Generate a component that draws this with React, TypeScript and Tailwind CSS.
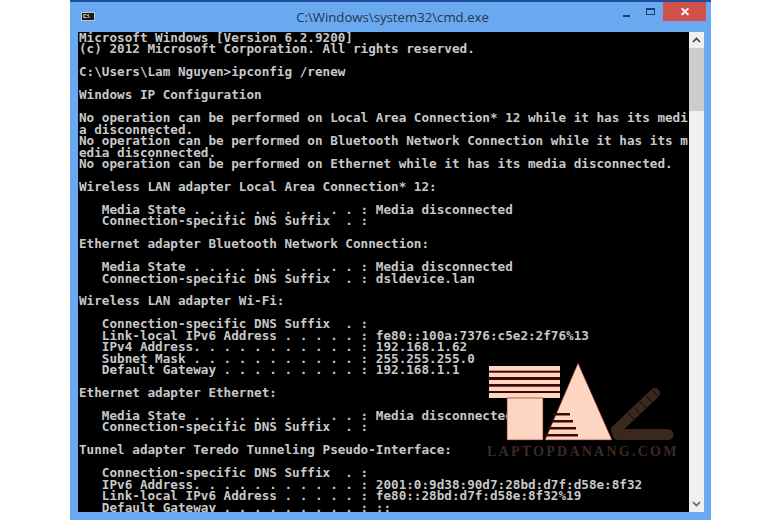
const lines = [
  'Microsoft Windows [Version 6.2.9200]',
  '(c) 2012 Microsoft Corporation. All rights reserved.',
  '',
  'C:\\Users\\Lam Nguyen>ipconfig /renew',
  '',
  'Windows IP Configuration',
  '',
  'No operation can be performed on Local Area Connection* 12 while it has its medi',
  'a disconnected.',
  'No operation can be performed on Bluetooth Network Connection while it has its m',
  'edia disconnected.',
  'No operation can be performed on Ethernet while it has its media disconnected.',
  '',
  'Wireless LAN adapter Local Area Connection* 12:',
  '',
  '   Media State . . . . . . . . . . . : Media disconnected',
  '   Connection-specific DNS Suffix  . :',
  '',
  'Ethernet adapter Bluetooth Network Connection:',
  '',
  '   Media State . . . . . . . . . . . : Media disconnected',
  '   Connection-specific DNS Suffix  . : dsldevice.lan',
  '',
  'Wireless LAN adapter Wi-Fi:',
  '',
  '   Connection-specific DNS Suffix  . :',
  '   Link-local IPv6 Address . . . . . : fe80::100a:7376:c5e2:2f76%13',
  '   IPv4 Address. . . . . . . . . . . : 192.168.1.62',
  '   Subnet Mask . . . . . . . . . . . : 255.255.255.0',
  '   Default Gateway . . . . . . . . . : 192.168.1.1',
  '',
  'Ethernet adapter Ethernet:',
  '',
  '   Media State . . . . . . . . . . . : Media disconnected',
  '   Connection-specific DNS Suffix  . :',
  '',
  'Tunnel adapter Teredo Tunneling Pseudo-Interface:',
  '',
  '   Connection-specific DNS Suffix  . :',
  '   IPv6 Address. . . . . . . . . . . : 2001:0:9d38:90d7:28bd:d7f:d58e:8f32',
  '   Link-local IPv6 Address . . . . . : fe80::28bd:d7f:d58e:8f32%19',
  '   Default Gateway . . . . . . . . . : ::',
];

// x range of each stripe cut into the triangle
const triangleStripes = [
  [73, 90],
  [71, 93],
  [68, 96],
  [65, 98],
];

function Logo() {
  return (
    <svg className="absolute left-[480px] top-[358px]" width="210" height="90" viewBox="0 0 210 90">
      {/* T bars */}
      <rect x="9" y="8" width="71" height="32" fill="#3a0a08" />
      {[
        [8, 4.7],
        [14.7, 4.3],
        [22, 4],
        [28.7, 4.3],
        [35, 5],
      ].map(([y, h]) => (
        <rect key={y} x="9" y={y} width="71" height={h} fill="#fdd5c0" />
      ))}
      <rect x="27" y="40" width="36" height="42" fill="#fdd5c0" stroke="#7a1f1a" strokeWidth="0.6" />
      {/* triangle */}
      <polygon points="98,5 132,82 65,82" fill="#fdd5c0" stroke="#7a1f1a" strokeWidth="0.6" />
      {triangleStripes.map(([a, b], i) => (
        <rect key={i} x={a} y={55 + i * 7} width={b - a} height="2.5" fill="#3a0a08" />
      ))}
      {/* pencil */}
      <line x1="138" y1="76.5" x2="188" y2="76.5" stroke="#3a281e" strokeWidth="11" strokeLinecap="round" />
      <line x1="136" y1="72" x2="175" y2="35" stroke="#3a281e" strokeWidth="10" strokeLinecap="round" />
      {[0, 1, 2, 3, 4].map((i) => (
        <line key={i} x1={148 + i * 6} y1={55 - i * 5.6} x2={155 + i * 6} y2={62 - i * 5.6} stroke="#0a0604" strokeWidth="1" />
      ))}
    </svg>
  );
}

export default function App() {
  return (
    <div className="relative w-[780px] h-[520px] bg-white overflow-hidden pl-[70px]">
      <div className="w-[641px] h-[520px] bg-[#6aa9f0] border-t-2 border-[#1e4f9c] flex flex-col">
        {/* title bar */}
        <div className="relative h-[30px] shrink-0 flex items-center justify-center font-['Open_Sans',sans-serif] text-[13.2px] text-[#24364f]">
          <div className="absolute left-[11px] top-[10px] w-[14px] h-[9px] bg-[#1a1a1a] border border-[#c8c8c8] text-[5px] leading-[7px] text-white font-bold pl-[1px]">
            C:\
          </div>
          <span className="ml-[4px] mt-[1px]">C:\Windows\system32\cmd.exe</span>
          <div className="absolute left-[553px] top-[13px] w-[7px] h-[2px] bg-[#1d3f6e]" />
          <div className="absolute left-[576px] top-[6px] w-[9px] h-[7px] border border-[#1d3f6e] border-t-2" />
          <div className="absolute left-[593px] top-[0px] w-[43px] h-[19px] bg-[#d0504c] flex items-center justify-center text-white text-[12px] font-bold">
            ✕
          </div>
        </div>
        {/* console + scrollbar */}
        <div className="flex h-[480px] ml-[8px] mr-[7px]">
          <div className="w-[611px] bg-black pl-[1px] overflow-hidden">
            <pre className="font-['DejaVu_Sans_Mono',monospace] text-[12.65px] font-bold leading-[11.45px] text-[#c8c8c8]">
              {lines.join('\n')}
            </pre>
          </div>
          <div className="w-[15px] bg-[#f0f0f0] flex flex-col">
            <div className="h-[16px] flex items-center justify-center">
              <svg width="9" height="6" viewBox="0 0 9 6"><path d="M1 5 L4.5 1.5 L8 5" fill="none" stroke="#404040" strokeWidth="1.6" /></svg>
            </div>
            <div className="h-[63px] bg-[#cdcdcd]" />
            <div className="flex-1" />
            <div className="h-[16px] flex items-center justify-center">
              <svg width="9" height="6" viewBox="0 0 9 6"><path d="M1 1 L4.5 4.5 L8 1" fill="none" stroke="#606060" strokeWidth="1.6" /></svg>
            </div>
          </div>
        </div>
      </div>
      <Logo />
      <div className="absolute left-[487px] top-[444px] font-['Liberation_Serif',serif] font-bold text-[14px] tracking-[2.25px] text-[#3a2a22] leading-[16px]">
        LAPTOPDANANG.COM
      </div>
    </div>
  );
}
